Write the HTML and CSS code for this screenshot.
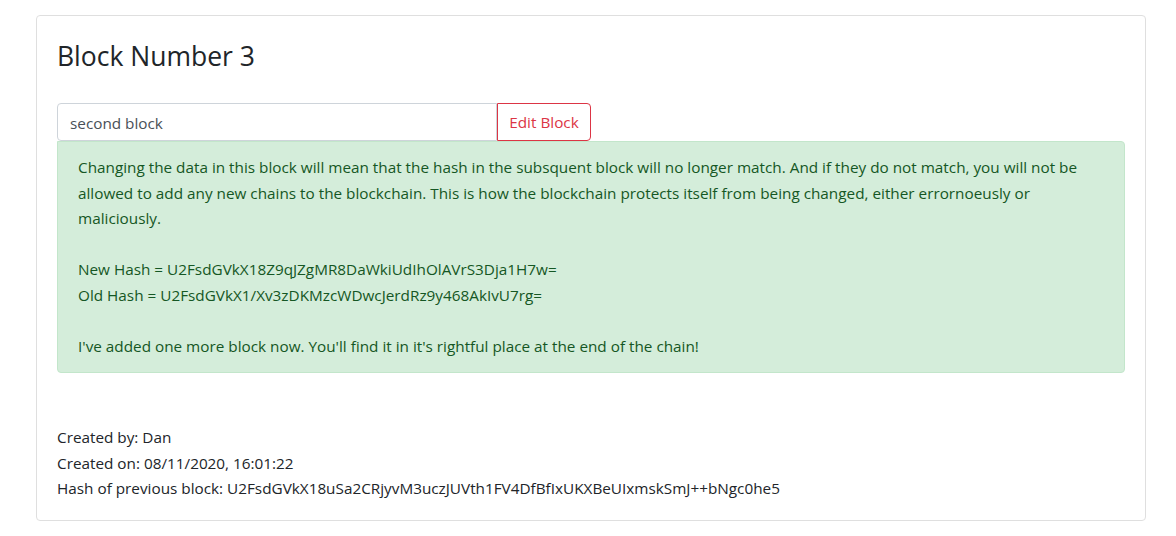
FILE: index.html
```html
<!DOCTYPE html>
<html>
<head>
<meta charset="utf-8">
<link rel="stylesheet" href="styles.css">
</head>
<body>
<div class="card">
  <div class="card-body">
    <h3 class="title">Block Number 3</h3>
    <div class="input-group">
      <input class="form-control" type="text" value="second block">
      <button class="btn-outline-danger">Edit Block</button>
    </div>
    <div class="alert">
      Changing the data in this block will mean that the hash in the subsquent block will no longer match. And if they do not match, you will not be allowed to add any new chains to the blockchain. This is how the blockchain protects itself from being changed, either errornoeusly or maliciously.<br><br>
      New Hash = U2FsdGVkX18Z9qJZgMR8DaWkiUdIhOlAVrS3Dja1H7w=<br>
      Old Hash = U2FsdGVkX1/Xv3zDKMzcWDwcJerdRz9y468AkIvU7rg=<br><br>
      I've added one more block now. You'll find it in it's rightful place at the end of the chain!
    </div>
    <div class="meta">
      <div>Created by: Dan</div>
      <div>Created on: 08/11/2020, 16:01:22</div>
      <div>Hash of previous block: U2FsdGVkX18uSa2CRjyvM3uczJUVth1FV4DfBfIxUKXBeUIxmskSmJ++bNgc0he5</div>
    </div>
  </div>
</div>
</body>
</html>
```

FILE: styles.css
```css
* { box-sizing: border-box; }
body {
  margin: 0;
  padding: 15px 30px 0 36px;
  background: #fff;
  font-family: "Open Sans", "Noto Sans", sans-serif;
  font-size: 15.3px;
  line-height: 25.5px;
  color: #212529;
}
.card {
  width: 1110px;
  height: 506px;
  border: 1px solid #dfdfdf;
  border-radius: 4px;
}
.card-body {
  padding: 20px;
}
.title {
  margin: 0;
  font-weight: 400;
  font-size: 26.5px;
  line-height: 40px;
  color: #212529;
}
.input-group {
  display: flex;
  margin-top: 27px;
}
.form-control {
  width: 440px;
  height: 38px;
  border: 1px solid #ced4da;
  border-radius: 4px 0 0 4px;
  padding: 7px 12px 5px;
  font: inherit;
  color: #495057;
  outline: none;
}
.btn-outline-danger {
  width: 94px;
  height: 38px;
  border: 1px solid #dc3545;
  border-radius: 0 4px 4px 0;
  background: #fff;
  color: #dc3545;
  font: inherit;
  padding: 2px 0 0;
}
.alert {
  background: #d4edda;
  border: 1px solid #c3e6cb;
  border-radius: 0 4px 4px 4px;
  color: #155724;
  padding: 13px 20px;
}
.meta {
  margin-top: 52px;
}
```
